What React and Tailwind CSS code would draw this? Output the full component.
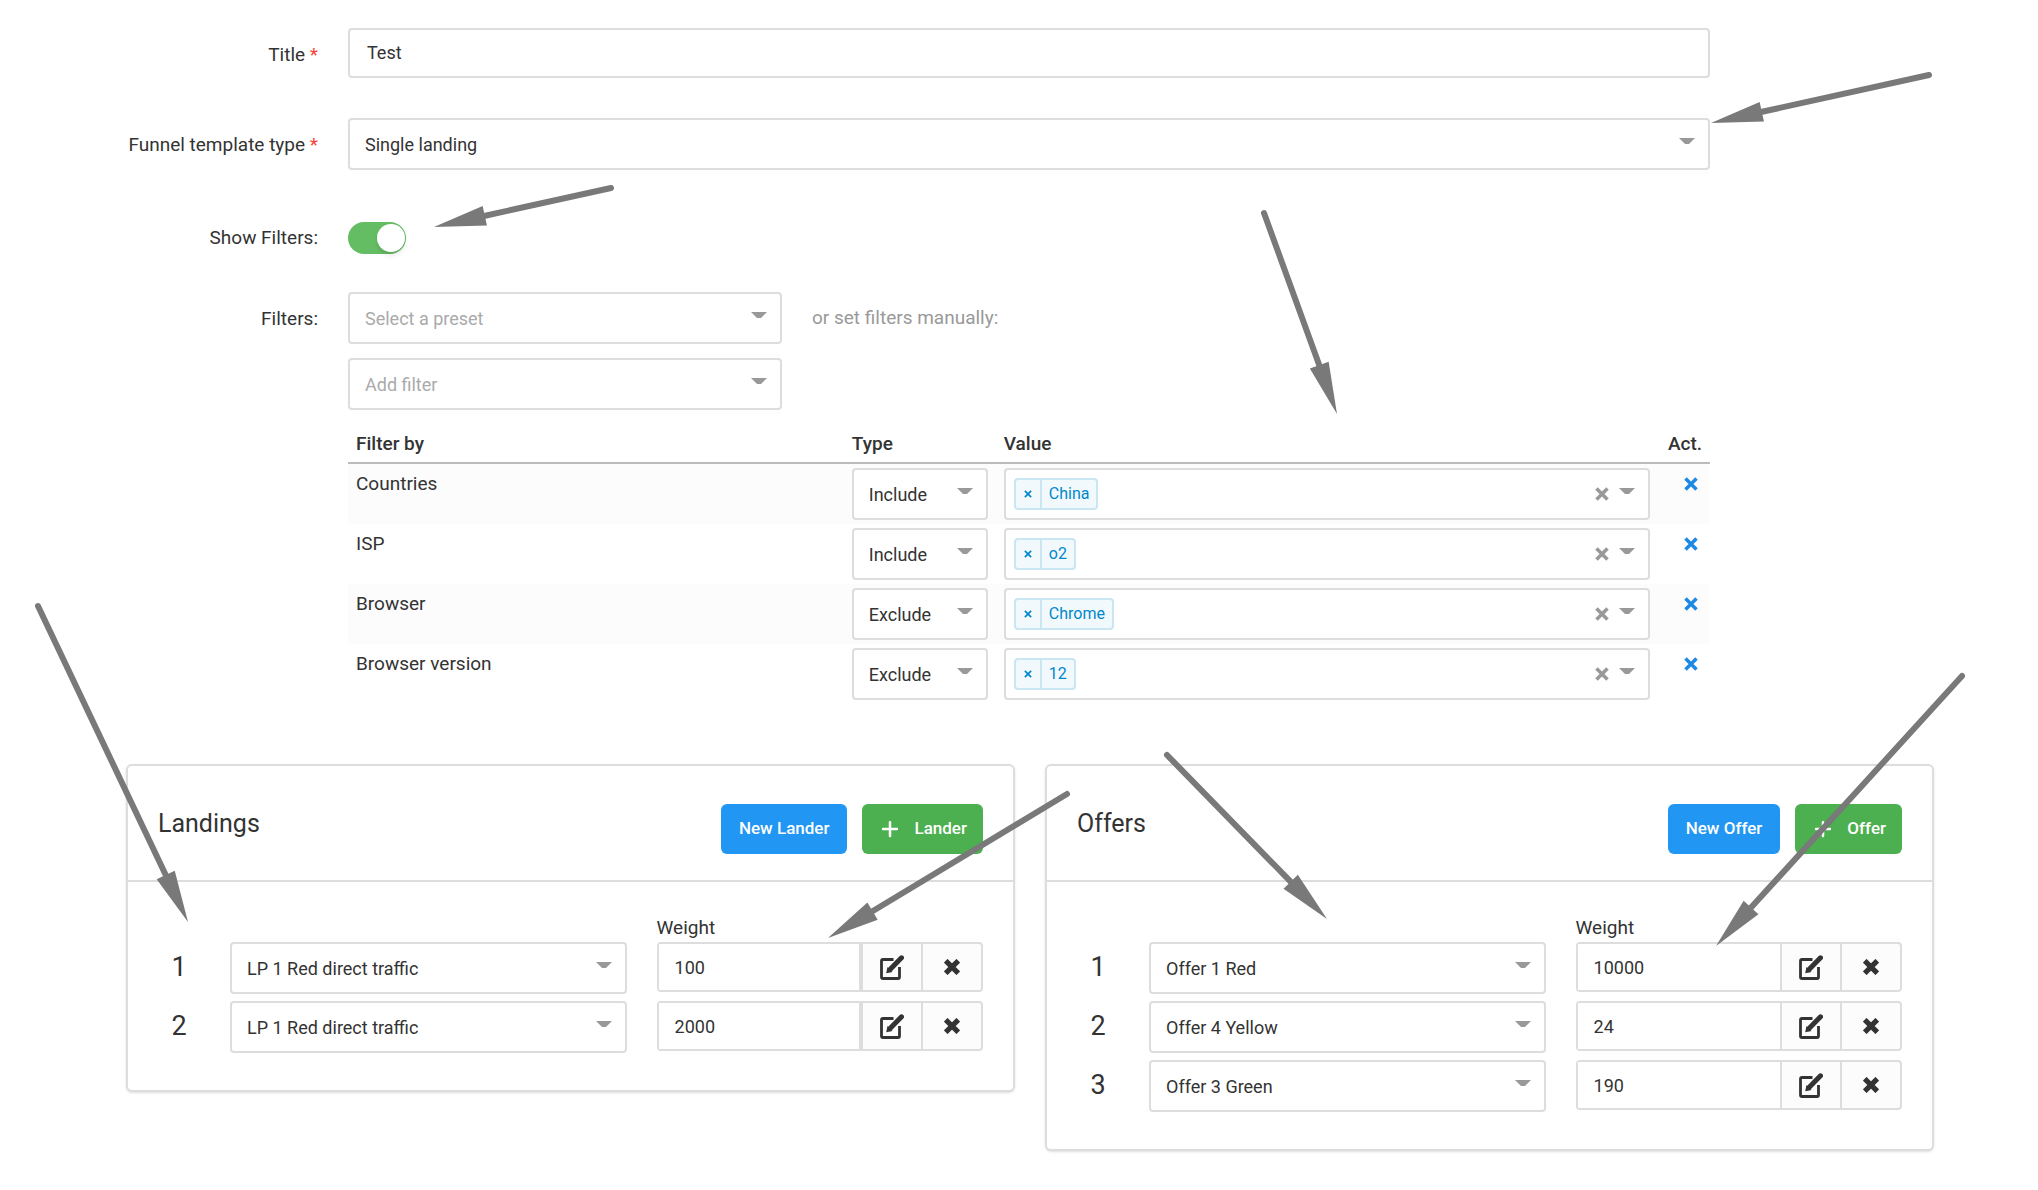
import React, { useState } from 'react';
import clsx from 'clsx';
import { FaPlus } from 'react-icons/fa6';

const filterRows = [
  { id: 'countries', name: 'Countries', type: 'Include', value: 'China' },
  { id: 'isp', name: 'ISP', type: 'Include', value: 'o2' },
  { id: 'browser', name: 'Browser', type: 'Exclude', value: 'Chrome' },
  { id: 'browser-version', name: 'Browser version', type: 'Exclude', value: '12' }
];

const landings = [
  { id: 'landing-1', name: 'LP 1 Red direct traffic', weight: '100' },
  { id: 'landing-2', name: 'LP 1 Red direct traffic', weight: '2000' }
];

const offers = [
  { id: 'offer-1', name: 'Offer 1 Red', weight: '10000' },
  { id: 'offer-2', name: 'Offer 4 Yellow', weight: '24' },
  { id: 'offer-3', name: 'Offer 3 Green', weight: '190' }
];

// from / to points of the hint arrows, in page units
const hints = [
  { from: [1929, 75], to: [1711, 123] },
  { from: [611, 188], to: [434, 227] },
  { from: [1264, 213], to: [1337, 414] },
  { from: [38, 606], to: [188, 922] },
  { from: [1067, 794], to: [828, 938] },
  { from: [1167, 755], to: [1327, 919] },
  { from: [1962, 676], to: [1716, 946] }
];

const Caret = () => (
  <svg viewBox="0 0 16 6" className="w-4 h-[6px] text-[#999]" fill="currentColor" aria-hidden="true">
    <path d="M0 0H16L10 6H6Z" />
  </svg>
);

const Cross = ({ className }) => (
  <svg viewBox="0 0 14 14" className={className} stroke="currentColor" fill="none" aria-hidden="true">
    <path d="M1.5 1.5L12.5 12.5M12.5 1.5L1.5 12.5" />
  </svg>
);

const SelectBox = ({ id, label, options, muted }) => (
  <div className="relative">
    <select
      id={id}
      aria-label={label}
      className={clsx(
        'block w-full h-[52px] appearance-none rounded border-2 border-[#ddd] bg-white pl-[15px] pr-10 text-[18px]',
        muted ? 'text-[#aaa]' : 'text-[#333]'
      )}
    >
      {options.map((option) => (
        <option key={option}>{option}</option>
      ))}
    </select>
    <span className="absolute right-[15px] top-5 pointer-events-none">
      <Caret />
    </span>
  </div>
);

const Label = ({ htmlFor, required, children }) => (
  <label htmlFor={htmlFor} className="pt-[13px] text-right text-[19px] leading-7">
    {children}
    {required && <span className="text-[#f44336]"> *</span>}
  </label>
);

const FilterTable = () => (
  <table className="w-full table-fixed border-collapse text-left">
    <colgroup>
      <col className="w-[36.4%]" />
      <col className="w-[152px]" />
      <col />
      <col className="w-[52px]" />
    </colgroup>
    <thead>
      <tr className="border-b-2 border-[#bbb] text-[19px] leading-7">
        <th className="px-2 pt-5 pb-1 font-medium">Filter by</th>
        <th className="px-2 pt-5 pb-1 font-medium">Type</th>
        <th className="px-2 pt-5 pb-1 font-medium">Value</th>
        <th className="px-2 pt-5 pb-1 font-medium text-right">Act.</th>
      </tr>
    </thead>
    <tbody>
      {filterRows.map((row) => (
        <tr key={row.id} className="h-[60px] align-top odd:bg-[#fcfcfc]">
          <td className="px-2 py-1 text-[19px] leading-8">{row.name}</td>
          <td className="px-2 py-1">
            <SelectBox
              label={`${row.name} type`}
              options={row.type === 'Include' ? ['Include', 'Exclude'] : ['Exclude', 'Include']}
            />
          </td>
          <td className="px-2 py-1">
            <div className="flex h-[52px] items-center rounded border-2 border-[#ddd] bg-white px-2">
              <span className="flex h-8 shrink-0 rounded-sm border-2 border-[#c9e6f2] bg-[#f2f9fc] text-[16px] leading-7 text-[#08c]">
                <button type="button" aria-label={`Remove ${row.value}`} className="flex w-[26px] items-center justify-center border-r-2 border-[#c9e6f2]">
                  <Cross className="w-2 h-2 stroke-[3]" />
                </button>
                <span className="px-[7px]">{row.value}</span>
              </span>
              <input aria-label={`${row.name} value`} className="min-w-0 flex-1 px-2 outline-none" />
              <button type="button" aria-label="Clear values" className="mr-[10px] text-[#999]">
                <Cross className="w-[14px] h-[14px] stroke-[3.5]" />
              </button>
              <span className="mr-[5px] mb-[6px] flex">
                <Caret />
              </span>
            </div>
          </td>
          <td className="py-1 pr-3">
            <button type="button" aria-label={`Delete ${row.name}`} className="flex h-8 w-full items-center justify-end text-[#1e88e5]">
              <Cross className="w-[14px] h-[14px] stroke-[3.5]" />
            </button>
          </td>
        </tr>
      ))}
    </tbody>
  </table>
);

const EditIcon = () => (
  <svg viewBox="0 0 24 25" className="w-6 h-[25px]" fill="none" stroke="currentColor" aria-hidden="true">
    <path d="M13.5 4.5H3Q1.5 4.5 1.5 6V22Q1.5 23.5 3 23.5H18Q19.5 23.5 19.5 22V12" strokeWidth="2.8" />
    <path d="M21.5 2.8L10 14.5" strokeWidth="5" strokeLinecap="round" />
    <path d="M7.5 12L6.2 18.2L12.5 17Z" fill="currentColor" stroke="none" />
  </svg>
);

const Panel = ({ title, item, rows, split }) => (
  <section className="rounded-md border-2 border-[#ddd] bg-white shadow-sm">
    <header className="flex justify-between border-b-2 border-[#ddd] px-[30px] pt-[38px] pb-[26px]">
      <h2 className="text-[25px] leading-10">{title}</h2>
      <div className="flex gap-[15px] text-[17px] font-medium text-white">
        <button className="h-[50px] rounded-md bg-[#2196f3] px-[18px]">New {item}</button>
        <button className="flex h-[50px] items-center gap-[14px] rounded-md bg-[#4caf50] pl-[18px] pr-4">
          <FaPlus className="w-5 h-5" />
          {item}
        </button>
      </div>
    </header>
    <div className="px-[30px] pt-8 pb-[37px]">
      <div className="grid grid-cols-[42px_396fr_326fr] gap-x-[30px]">
        <span className="col-start-3 text-[19px] leading-7">Weight</span>
      </div>
      <div className="flex flex-col gap-[7px]">
        {rows.map((row, index) => (
          <div key={row.id} className="grid grid-cols-[42px_396fr_326fr] gap-x-[30px]">
            <span className="text-center text-[27px] leading-[50px]">{index + 1}</span>
            <SelectBox label={`${item} ${index + 1}`} options={[row.name]} />
            <div className="flex h-[50px] min-w-0 rounded border-2 border-[#ddd] bg-[#fcfcfc]">
              <input
                aria-label={`${item} ${index + 1} weight`}
                defaultValue={row.weight}
                className={clsx(
                  'w-0 min-w-0 flex-1 border-[#ddd] bg-white px-4 text-[18px] outline-none',
                  split && 'border-r-2'
                )}
              />
              <button aria-label="Edit" className="flex w-[60px] items-center justify-center border-l-2 border-[#ddd]">
                <EditIcon />
              </button>
              <button aria-label="Remove" className="flex w-[60px] items-center justify-center border-l-2 border-[#ddd]">
                <Cross className="w-4 h-4 stroke-[4.5]" />
              </button>
            </div>
          </div>
        ))}
      </div>
    </div>
  </section>
);

const HintArrows = () => (
  <svg viewBox="0 0 2038 1190" className="absolute left-0 top-0 w-full pointer-events-none text-[#797979]" aria-hidden="true">
    {hints.map(({ from, to }) => {
      const angle = (Math.atan2(to[1] - from[1], to[0] - from[0]) * 180) / Math.PI;
      const length = Math.hypot(to[0] - from[0], to[1] - from[1]);
      return (
        <g key={from.join()} transform={`translate(${to[0]} ${to[1]}) rotate(${angle})`}>
          <path d={`M${-length} 0H-50`} stroke="currentColor" strokeWidth="6" strokeLinecap="round" />
          <path d="M0 0L-52 -10V10Z" fill="currentColor" />
        </g>
      );
    })}
  </svg>
);

const App = () => {
  const [showFilters, setShowFilters] = useState(true);

  return (
    <div className="relative min-h-screen bg-white pl-[126px] pr-[104px] pt-7 pb-9 font-[Roboto,sans-serif] text-[#333]">
      <form className="grid grid-cols-[192fr_1362fr_194fr] gap-x-[30px]">
        <Label htmlFor="title" required>Title</Label>
        <div className="mb-10">
          <input
            id="title"
            defaultValue="Test"
            className="block w-full h-[50px] rounded border-2 border-[#ddd] px-[17px] pb-[2px] text-[18px]"
          />
        </div>

        <div className="col-start-1 flex flex-col">
          <Label htmlFor="template-type" required>Funnel template type</Label>
        </div>
        <div className="mb-[52px]">
          <SelectBox id="template-type" options={['Single landing', 'Multiple landings']} />
        </div>

        <label htmlFor="show-filters" className="col-start-1 text-right text-[19px] leading-8">Show Filters:</label>
        <div className="mb-[38px]">
          <input
            id="show-filters"
            type="checkbox"
            role="switch"
            checked={showFilters}
            onChange={(e) => setShowFilters(e.target.checked)}
            className="block h-8 w-[58px] appearance-none rounded-full bg-[#ccc] p-[2px] checked:bg-[#64bd63] checked:pl-[29px] before:block before:h-7 before:w-7 before:rounded-full before:bg-white before:shadow-md"
          />
        </div>

        {showFilters && (
          <>
            <div className="col-start-1 flex flex-col">
              <Label htmlFor="preset">Filters:</Label>
            </div>
            <div>
              <div className="mb-[14px] flex items-center gap-[30px]">
                <div className="w-[434px]">
                  <SelectBox id="preset" options={['Select a preset']} muted />
                </div>
                <span className="text-[19px] text-[#999]">or set filters manually:</span>
              </div>
              <div className="w-[434px]">
                <SelectBox label="Add filter" options={['Add filter']} muted />
              </div>
              <FilterTable />
            </div>
          </>
        )}
      </form>

      <div className="mt-[60px] grid grid-cols-2 items-start gap-[30px]">
        <Panel title="Landings" item="Lander" rows={landings} split />
        <Panel title="Offers" item="Offer" rows={offers} />
      </div>

      <HintArrows />
    </div>
  );
};

export default App;
